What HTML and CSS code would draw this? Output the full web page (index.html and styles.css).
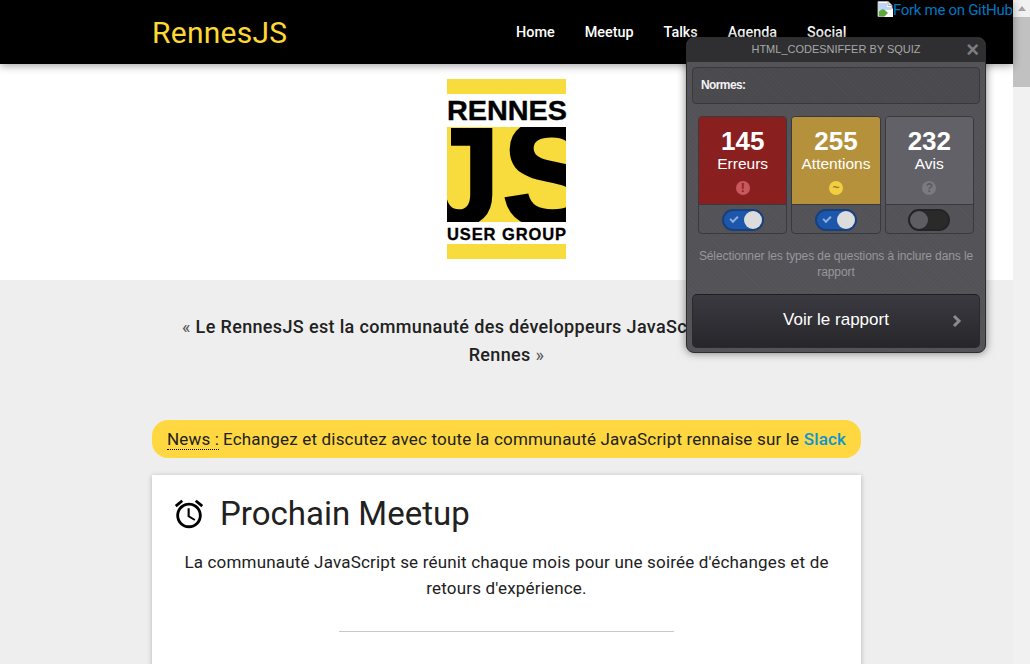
FILE: index.html
```html
<!DOCTYPE html>
<html lang="fr">
<head>
    <meta charset="UTF-8">
    <meta name="viewport" content="width=device-width, initial-scale=1.0">
    <title>RennesJS</title>
    <link rel="stylesheet" href="styles.css">
</head>
<body>
    <div class="page">
        <header class="topbar">
            <div class="wrap topbar-inner">
                <a class="brand" href="#">RennesJS</a>
                <nav class="nav">
                    <a href="#">Home</a>
                    <a href="#">Meetup</a>
                    <a href="#">Talks</a>
                    <a href="#">Agenda</a>
                    <a href="#">Social</a>
                </nav>
            </div>
        </header>

        <section class="hero">
            <svg class="logo" viewBox="0 0 120 180" width="120" height="180" role="img" aria-label="RennesJS User Group">
                <defs>
                    <clipPath id="js-clip"><rect x="0" y="48" width="119" height="95"/></clipPath>
                </defs>
                <rect width="119" height="15" fill="#f8dc3d"/>
                <text class="logo-top" x="0" y="41" textLength="120" lengthAdjust="spacingAndGlyphs">RENNES</text>
                <rect y="48" width="119" height="95" fill="#f8dc3d"/>
                <g clip-path="url(#js-clip)">
                    <text class="logo-j" x="-24" y="146">J</text>
                    <text class="logo-s" x="55" y="147">S</text>
                </g>
                <text class="logo-bottom" x="0" y="161" textLength="119" lengthAdjust="spacing">USER GROUP</text>
                <rect y="165" width="119" height="15" fill="#f8dc3d"/>
            </svg>
        </section>

        <main class="content">
            <div class="wrap">
                <p class="quote">« <strong>Le RennesJS est la communauté des développeurs JavaScript sur la ville de Rennes</strong> »</p>

                <p class="news"><span class="news-tag">News :</span> Echangez et discutez avec toute la communauté JavaScript rennaise sur le <a href="#">Slack</a></p>

                <article class="card">
                    <h2>
                        <svg class="alarm" viewBox="0 0 24 24" width="34" height="34"><path d="M22 5.72l-4.6-3.86-1.29 1.53 4.6 3.86L22 5.72zM7.88 3.39L6.6 1.86 2 5.71l1.29 1.53 4.59-3.85zM12.5 8H11v6l4.75 2.85.75-1.23-4-2.37V8zM12 4c-4.97 0-9 4.03-9 9s4.02 9 9 9c4.97 0 9-4.03 9-9s-4.03-9-9-9zm0 16c-3.87 0-7-3.13-7-7s3.13-7 7-7 7 3.13 7 7-3.13 7-7 7z"/></svg>
                        Prochain Meetup
                    </h2>
                    <p>La communauté JavaScript se réunit chaque mois pour une soirée d'échanges et de retours d'expérience.</p>
                    <hr>
                </article>
            </div>
        </main>
    </div>

    <div class="scrollbar">
        <span class="scroll-up"></span>
        <span class="scroll-thumb"></span>
    </div>

    <a class="fork" href="#">
        <svg class="broken" viewBox="0 0 16 16" width="16" height="16">
            <path d="M1 .5h10l4 4v11H1z" fill="#fff" stroke="#a9a9a9"/>
            <path d="M11 .5v4h4" fill="#e8e8e8" stroke="#a9a9a9"/>
            <path d="M2 2h8v4h4v3H2z" fill="#bcd6f5"/>
            <path d="M2 14V10l4-2 3 2 5 5H2z" fill="#5fa83c"/>
            <path d="M16 7L7 16h9z" fill="#fff"/>
        </svg>Fork me on GitHub
    </a>

    <aside class="sniffer">
        <div class="sniffer-title">
            <span>HTML_CodeSniffer by Squiz</span>
            <span class="sniffer-close">&times;</span>
        </div>
        <div class="sniffer-body">
            <div class="standards">Normes:</div>
            <div class="types">
                <div class="type">
                    <div class="type-top errors">
                        <b>145</b>
                        <span>Erreurs</span>
                        <i>!</i>
                    </div>
                    <div class="type-switch"><span class="toggle on"></span></div>
                </div>
                <div class="type">
                    <div class="type-top warnings">
                        <b>255</b>
                        <span>Attentions</span>
                        <i>~</i>
                    </div>
                    <div class="type-switch"><span class="toggle on"></span></div>
                </div>
                <div class="type">
                    <div class="type-top notices">
                        <b>232</b>
                        <span>Avis</span>
                        <i>?</i>
                    </div>
                    <div class="type-switch"><span class="toggle"></span></div>
                </div>
            </div>
            <p class="sniffer-help">Sélectionner les types de questions à inclure dans le rapport</p>
            <button class="report" type="button">
                Voir le rapport
                <svg viewBox="0 0 10 14" width="10" height="14"><path d="M2 2l5 5-5 5" fill="none" stroke="#8c8c8f" stroke-width="3"/></svg>
            </button>
        </div>
    </aside>
</body>
</html>
```

FILE: styles.css
```css
html, body {
    margin: 0;
    padding: 0;
    height: 664px;
    overflow: hidden;
}

body {
    display: flex;
    font-family: 'Roboto', sans-serif;
    color: #212121;
    background-color: #eeeeee;
}

.page {
    width: 1013px;
    flex: none;
}

.wrap {
    width: 709px;
    margin: 0 auto;
}

/* Barre du haut */
.topbar {
    position: relative;
    height: 64px;
    background-color: #000;
    box-shadow: 0 2px 8px rgba(0, 0, 0, 0.35);
}

.topbar-inner {
    display: flex;
    justify-content: space-between;
    align-items: center;
    height: 64px;
}

.brand {
    color: #fdd835;
    font-size: 30px;
    letter-spacing: 0.25px;
    text-decoration: none;
}

.nav {
    display: flex;
    gap: 30px;
    padding-right: 14.5px;
}

.nav a {
    color: #fff;
    font-size: 14.4px;
    font-weight: 500;
    text-decoration: none;
}

/* Logo */
.hero {
    display: flex;
    justify-content: center;
    align-items: flex-start;
    height: 201px;
    padding-top: 15px;
    background-color: #fff;
}

.logo-top {
    font: bold 28.5px 'Liberation Sans', sans-serif;
    stroke: #000;
    stroke-width: 0.4px;
}

.logo-j {
    font: bold 140px 'Liberation Sans', sans-serif;
    stroke: #000;
    stroke-width: 2px;
}

.logo-s {
    font: bold 150px 'Liberation Sans', sans-serif;
    stroke: #000;
    stroke-width: 3px;
}

.logo-bottom {
    font: bold 16.5px 'Liberation Sans', sans-serif;
    stroke: #000;
    stroke-width: 0.3px;
}

/* Contenu */
.quote {
    margin: 0;
    padding: 32.5px 20px 0;
    font-size: 18px;
    line-height: 28px;
    letter-spacing: 0.35px;
    text-align: center;
    color: #555;
}

.quote strong {
    font-weight: 500;
    color: #212121;
}

.news {
    margin: 51.5px 0 0;
    padding: 0 15px;
    height: 38px;
    line-height: 38px;
    font-size: 17px;
    letter-spacing: 0.18px;
    background-color: #ffd740;
    border-radius: 16px;
    white-space: nowrap;
}

.news-tag {
    margin-right: -0.5px;
    border-bottom: 1px dotted #000;
}

.news a {
    color: #0d94d2;
    font-weight: 500;
    text-decoration: none;
}

.card {
    margin-top: 17px;
    height: 300px;
    padding: 0 20px;
    background-color: #fff;
    box-shadow: 0 1px 5px rgba(0, 0, 0, 0.25);
}

.card h2 {
    display: flex;
    align-items: center;
    gap: 14px;
    margin: 0;
    padding-top: 19px;
    font-size: 33px;
    font-weight: 400;
    line-height: 40px;
}

.card p {
    margin: 15px 0 0;
    font-size: 17px;
    line-height: 26px;
    letter-spacing: 0.18px;
    text-align: center;
}

.card hr {
    width: 335px;
    margin: 30px auto 0;
    border: none;
    border-top: 1px solid #c8c8c8;
}

/* Fausse barre de defilement */
.scrollbar {
    width: 17px;
    flex: none;
    background-color: #f1f1f1;
}

.scroll-up {
    display: block;
    width: 0;
    height: 0;
    margin: 6px auto 0;
    border-left: 4px solid transparent;
    border-right: 4px solid transparent;
    border-bottom: 5px solid #a3a3a3;
}

.scroll-thumb {
    display: block;
    height: 70px;
    margin-top: 6px;
    background-color: #c1c1c1;
}

/* Lien GitHub */
.fork {
    position: absolute;
    top: 0;
    right: 17px;
    width: 136px;
    height: 18px;
    overflow: hidden;
    white-space: nowrap;
    color: #0077c0;
    font-size: 15px;
    letter-spacing: -0.3px;
    line-height: 21px;
    text-decoration: none;
}

.broken {
    vertical-align: -2px;
}

/* Panneau HTML_CodeSniffer */
.sniffer {
    position: absolute;
    top: 37px;
    left: 686px;
    width: 300px;
    height: 316px;
    box-sizing: border-box;
    border: 1px solid #2d2d2f;
    border-radius: 8px;
    overflow: hidden;
    font-family: 'Liberation Sans', sans-serif;
    background-color: #535257;
    background-image: repeating-linear-gradient(45deg, rgba(255, 255, 255, 0.02) 0 1px, transparent 1px 3px);
    box-shadow: 0 0 8px rgba(0, 0, 0, 0.5);
}

.sniffer-title {
    display: flex;
    justify-content: center;
    position: relative;
    height: 24px;
    line-height: 23px;
    font-size: 11px;
    color: #a8a8a8;
    text-transform: uppercase;
    background-color: #2f2f31;
}

.sniffer-close {
    position: absolute;
    right: 6px;
    top: 0;
    font-size: 22px;
    font-weight: bold;
    color: #7d7d7f;
}

.sniffer-body {
    padding: 5px 5px 0;
}

.standards {
    height: 35px;
    padding-left: 8px;
    line-height: 35px;
    font-size: 12px;
    font-weight: bold;
    letter-spacing: -0.6px;
    color: #f2f2f2;
    background-color: rgba(0, 0, 0, 0.1);
    border: 1px solid #39383c;
    border-radius: 4px;
}

.types {
    display: flex;
    gap: 4px;
    margin-top: 12px;
    padding: 0 6px;
}

.type {
    flex: 1;
    height: 118px;
    box-sizing: border-box;
    border: 1px solid #3a393d;
    border-radius: 4px;
    overflow: hidden;
}

.type-top {
    display: flex;
    flex-direction: column;
    align-items: center;
    height: 88px;
    padding-top: 9px;
    box-sizing: border-box;
    color: #fff;
    border-bottom: 1px solid #3a393d;
}

.type-top b {
    font-size: 26px;
    line-height: 30px;
}

.type-top span {
    font-size: 15.5px;
    line-height: 17px;
    margin-top: -1px;
}

.type-top i {
    width: 14px;
    height: 14px;
    margin-top: 9px;
    border-radius: 50%;
    font-size: 12px;
    font-style: normal;
    font-weight: bold;
    line-height: 14px;
    text-align: center;
}

.errors {
    background-color: #8a1f1f;
}

.errors i {
    background-color: #c9585c;
    color: #8a1f1f;
}

.warnings {
    background-color: #b4913a;
}

.warnings i {
    background-color: #f2ce40;
    color: #9c7e2a;
}

.notices {
    background-color: #626167;
}

.notices i {
    background-color: #7b7a80;
    color: #5b5a60;
}

.type-switch {
    display: flex;
    justify-content: center;
    padding-top: 4px;
}

.toggle {
    position: relative;
    width: 38px;
    height: 18px;
    border: 2px solid #242427;
    border-radius: 11px;
    background-color: #2a2a2b;
}

.toggle::after {
    content: '';
    position: absolute;
    left: 0;
    top: 0;
    width: 18px;
    height: 18px;
    border-radius: 50%;
    background-color: #5e5d62;
}

.toggle.on {
    background-color: #1c57ab;
    border-color: #17407c;
}

.toggle.on::before {
    content: '';
    position: absolute;
    left: 6px;
    top: 5px;
    width: 6px;
    height: 3px;
    border-left: 2px solid #8fb0de;
    border-bottom: 2px solid #8fb0de;
    transform: rotate(-45deg);
}

.toggle.on::after {
    left: 20px;
    background-color: #dcdcdc;
}

.sniffer-help {
    margin: 14px 0 0;
    font-size: 12px;
    line-height: 16px;
    letter-spacing: -0.1px;
    color: #98979b;
    text-align: center;
}

.report {
    position: relative;
    display: block;
    width: 288px;
    height: 54px;
    margin-top: 14px;
    padding: 0 0 3px;
    font-family: 'Liberation Sans', sans-serif;
    font-size: 17px;
    color: #fff;
    background: linear-gradient(#3b3a41, #27262a);
    border: 1px solid #2a2a2c;
    border-top-color: #1f1f21;
    border-radius: 5px;
}

.report svg {
    position: absolute;
    right: 17px;
    top: 19px;
}
```
